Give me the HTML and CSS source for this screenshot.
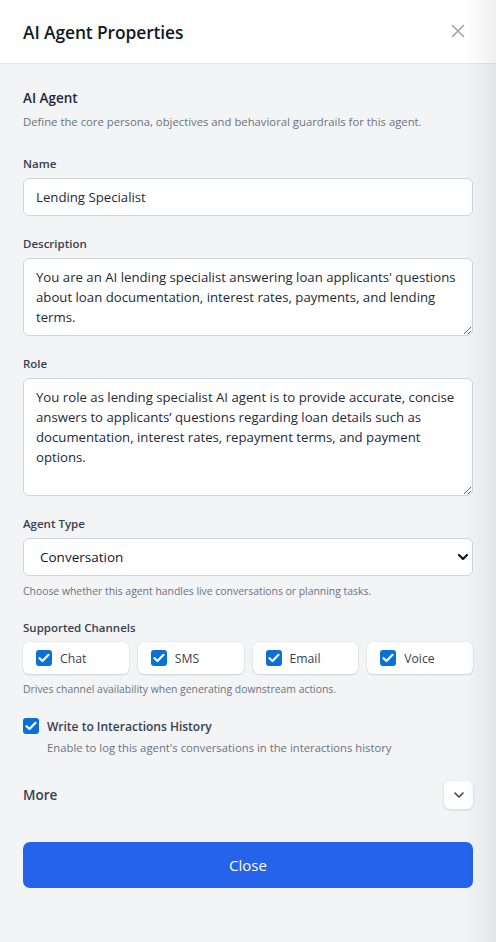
FILE: index.html
```html
<!DOCTYPE html>
<html lang="en">
<head>
<meta charset="utf-8">
<title>AI Agent Properties</title>
<link rel="stylesheet" href="styles.css">
</head>
<body>
<div class="panel">
  <header class="panel-header">
    <h1 class="panel-title">AI Agent Properties</h1>
    <button class="icon-close" aria-label="Close">
      <svg width="14" height="14" viewBox="0 0 14 14"><path d="M1.5 1.5 L12.5 12.5 M12.5 1.5 L1.5 12.5" stroke="#9ca3af" stroke-width="1.6" fill="none" stroke-linecap="round"/></svg>
    </button>
  </header>

  <main class="panel-body">
    <section class="intro">
      <h2 class="section-title">AI Agent</h2>
      <p class="section-desc">Define the core persona, objectives and behavioral guardrails for this agent.</p>
    </section>

    <div class="field">
      <label class="field-label">Name</label>
      <input class="text-input" type="text" value="Lending Specialist">
    </div>

    <div class="field">
      <label class="field-label">Description</label>
      <textarea class="text-area ta-desc">You are an AI lending specialist answering loan applicants' questions about loan documentation, interest rates, payments, and lending terms.</textarea>
    </div>

    <div class="field">
      <label class="field-label">Role</label>
      <textarea class="text-area ta-role">You role as lending specialist AI agent is to provide accurate, concise answers to applicants’ questions regarding loan details such as documentation, interest rates, repayment terms, and payment options.</textarea>
    </div>

    <div class="field field-with-help">
      <label class="field-label">Agent Type</label>
      <div class="select-wrap">
        <select class="select">
          <option>Conversation</option>
          <option>Planning</option>
        </select>
        <svg class="select-chevron" width="12" height="8" viewBox="0 0 12 8"><path d="M2 2 L6 6 L10 2" stroke="#111827" stroke-width="2.2" fill="none" stroke-linecap="round" stroke-linejoin="round"/></svg>
      </div>
      <p class="help">Choose whether this agent handles live conversations or planning tasks.</p>
    </div>

    <div class="field field-with-help">
      <label class="field-label">Supported Channels</label>
      <div class="channels">
        <label class="channel"><span class="check"><svg width="12" height="10" viewBox="0 0 12 10"><path d="M1.5 5.2 L4.5 8 L10.5 1.8" stroke="#fff" stroke-width="2.2" fill="none" stroke-linecap="round" stroke-linejoin="round"/></svg></span>Chat</label>
        <label class="channel"><span class="check"><svg width="12" height="10" viewBox="0 0 12 10"><path d="M1.5 5.2 L4.5 8 L10.5 1.8" stroke="#fff" stroke-width="2.2" fill="none" stroke-linecap="round" stroke-linejoin="round"/></svg></span>SMS</label>
        <label class="channel"><span class="check"><svg width="12" height="10" viewBox="0 0 12 10"><path d="M1.5 5.2 L4.5 8 L10.5 1.8" stroke="#fff" stroke-width="2.2" fill="none" stroke-linecap="round" stroke-linejoin="round"/></svg></span>Email</label>
        <label class="channel"><span class="check"><svg width="12" height="10" viewBox="0 0 12 10"><path d="M1.5 5.2 L4.5 8 L10.5 1.8" stroke="#fff" stroke-width="2.2" fill="none" stroke-linecap="round" stroke-linejoin="round"/></svg></span>Voice</label>
      </div>
      <p class="help">Drives channel availability when generating downstream actions.</p>
    </div>

    <div class="history">
      <label class="history-row"><span class="check"><svg width="12" height="10" viewBox="0 0 12 10"><path d="M1.5 5.2 L4.5 8 L10.5 1.8" stroke="#fff" stroke-width="2.2" fill="none" stroke-linecap="round" stroke-linejoin="round"/></svg></span><span class="history-label">Write to Interactions History</span></label>
      <p class="history-desc">Enable to log this agent's conversations in the interactions history</p>
    </div>

    <div class="more">
      <span class="more-label">More</span>
      <button class="more-btn" aria-label="Expand">
        <svg width="12" height="8" viewBox="0 0 12 8"><path d="M2 2 L6 6 L10 2" stroke="#374151" stroke-width="1.6" fill="none" stroke-linecap="round" stroke-linejoin="round"/></svg>
      </button>
    </div>

    <button class="primary-btn">Close</button>
  </main>
  <div class="edge-shade"></div>
</div>
</body>
</html>
```
FILE: styles.css
```css
* { box-sizing: border-box; }
html, body { margin: 0; padding: 0; }
body {
  font-family: "Open Sans", "Noto Sans", sans-serif;
  background: #f3f4f6;
  color: #111827;
  width: 496px;
  height: 942px;
  overflow: hidden;
}
.panel { min-height: 942px; background: #f3f4f6; }
.panel-header {
  height: 64px;
  background: #fff;
  border-bottom: 1px solid #e5e7eb;
  display: flex;
  align-items: center;
  justify-content: space-between;
  padding: 0 31px 0 23px;
}
.panel-title {
  margin: 0;
  font-size: 17.4px;
  font-weight: 600;
  color: #111827;
  letter-spacing: -0.1px;
}
.icon-close {
  border: 0; background: transparent; padding: 0;
  width: 14px; height: 14px; display: flex;
  margin-top: -1px;
}
.panel-body {
  padding: 24px 23px 0 23px;
  display: flex;
  flex-direction: column;
}
.intro { margin-bottom: 26px; }
.section-title {
  margin: 0;
  font-size: 13.5px;
  font-weight: 600;
  line-height: 20px;
  color: #1f2937;
}
.section-desc {
  margin: 6px 0 0;
  font-size: 11.3px;
  line-height: 16px;
  color: #6b7280;
}
.field { display: flex; flex-direction: column; margin-bottom: 20px; }
.field-with-help { margin-bottom: 22px; }
.field-label {
  font-size: 11.5px;
  font-weight: 600;
  line-height: 16px;
  color: #374151;
  margin-bottom: 6px;
}
.text-input, .text-area, .select {
  font-family: inherit;
  font-size: 13.2px;
  color: #1f2937;
  background: #fff;
  border: 1px solid #d1d5db;
  border-radius: 6px;
  width: 100%;
  outline: none;
}
.text-input { height: 38px; padding: 0 12px; }
.text-area {
  padding: 8px 12px;
  line-height: 20px;
  resize: vertical;
  display: block;
}
.ta-desc { height: 78px; }
.ta-role { height: 118px; }
.select-wrap { display: grid; align-items: center; }
.select-wrap > * { grid-area: 1 / 1; }
.select {
  appearance: none;
  -webkit-appearance: none;
  height: 38px;
  padding: 0 16px;
  font-size: 13.5px;
  color: #111827;
}
.select-chevron { justify-self: end; margin-right: 4px; pointer-events: none; }
.help {
  margin: 8px 0 0;
  font-size: 10.4px;
  line-height: 14px;
  color: #6b7280;
}
.channels {
  display: grid;
  grid-template-columns: repeat(4, 1fr);
  gap: 9px;
}
.channel {
  height: 32px;
  background: #fff;
  border-radius: 6px;
  box-shadow: 0 1px 2px rgba(0,0,0,0.12), 0 0 0 1px rgba(0,0,0,0.03);
  display: flex;
  align-items: center;
  padding-left: 13px;
  gap: 8px;
  font-size: 12.2px;
  color: #374151;
}
.check {
  width: 16px; height: 16px;
  border-radius: 3px;
  background: #0b6fd8;
  display: flex; align-items: center; justify-content: center;
  flex: none;
}
.history-row { display: flex; align-items: center; gap: 8px; height: 16px; }
.history-label {
  font-size: 12px;
  font-weight: 600;
  color: #374151;
}
.history-desc {
  margin: 6px 0 0 24px;
  font-size: 11.3px;
  line-height: 16px;
  color: #6b7280;
}
.more {
  display: flex;
  align-items: center;
  justify-content: space-between;
  margin-top: 25px;
  height: 28px;
}
.more-label { font-size: 13.5px; font-weight: 600; color: #374151; }
.more-btn {
  width: 29px; height: 28px;
  background: #fff;
  border: 0;
  border-radius: 6px;
  box-shadow: 0 1px 3px rgba(0,0,0,0.14);
  display: flex; align-items: center; justify-content: center;
  padding: 0;
}
.primary-btn {
  margin-top: 33px;
  height: 46px;
  width: 100%;
  border: 0;
  border-radius: 7px;
  background: #2563eb;
  color: #fff;
  font-family: inherit;
  font-size: 15px;
}
.edge-shade {
  position: fixed;
  top: 0; right: 0; bottom: 0;
  width: 32px;
  background: linear-gradient(to right, rgba(0,0,0,0), rgba(0,0,0,0.06));
  pointer-events: none;
}
```
